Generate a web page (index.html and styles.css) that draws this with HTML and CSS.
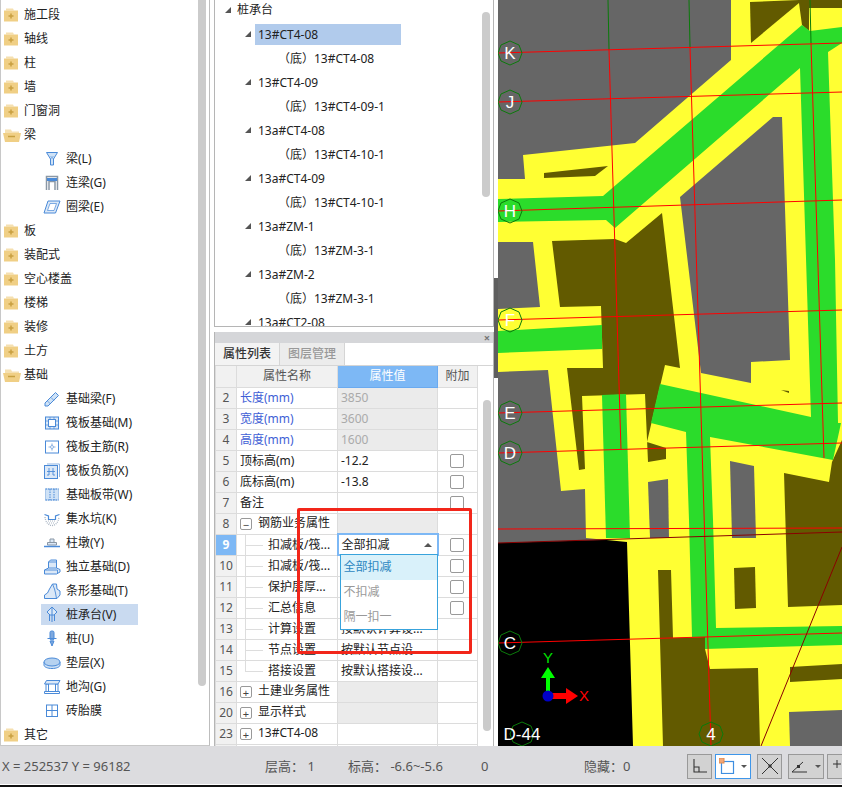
FILE: index.html
```html
<!DOCTYPE html>
<html lang="zh">
<head>
<meta charset="utf-8">
<title>属性列表</title>
<link rel="stylesheet" href="styles.css">
</head>
<body>
<svg class="defs" width="0" height="0">
  <symbol id="fc" viewBox="0 0 18 18"><path d="M3 2.500h7l1 2H3z" fill="#f5e0b0"/><rect x="1" y="4.500" width="14" height="11" fill="#f0cf85"/><path d="M8 7.500v5M5.500 10h5" stroke="#c8a040" stroke-width="1.500"/></symbol>
  <symbol id="fo" viewBox="0 0 18 18"><path d="M2 3.500h6l1 2h7V8H2z" fill="#f5e0b0"/><path d="M0 7h18l-2 9H2z" fill="#f0cf85"/><path d="M5 10.500h7" stroke="#c8a040" stroke-width="1.500"/></symbol>
</svg>
<div class="app">
  <div class="main">
    <aside class="left">
      <div class="tree">
        <div class="row"><svg class="fi"><use href="#fc"/></svg>施工段</div>
        <div class="row"><svg class="fi"><use href="#fc"/></svg>轴线</div>
        <div class="row"><svg class="fi"><use href="#fc"/></svg>柱</div>
        <div class="row"><svg class="fi"><use href="#fc"/></svg>墙</div>
        <div class="row"><svg class="fi"><use href="#fc"/></svg>门窗洞</div>
        <div class="row"><svg class="fi"><use href="#fo"/></svg>梁</div>
        <div class="row sub"><span class="item"><svg class="ic" viewBox="0 0 18 18"><path d="M3.500 2.500h11L10.500 9v6h-3V9z" fill="#cfe2f6" stroke="#4a8ad8"/><path d="M7.500 9l3-3M7.500 6l3 3" stroke="#4a8ad8" stroke-width=".6"/></svg>梁(L)</span></div>
        <div class="row sub"><span class="item"><svg class="ic" viewBox="0 0 18 18"><path d="M3.500 16V2.500h11V16M6 16V7.500h6V16" fill="none" stroke="#8a97a5" stroke-width="1.500"/><rect x="4" y="4" width="10" height="3" fill="#4a8ad8"/></svg>连梁(G)</span></div>
        <div class="row sub"><span class="item"><svg class="ic" viewBox="0 0 18 18"><path d="M5 3h12l-4.500 12H1z" fill="#dbe8f7" stroke="#4a8ad8"/><path d="M7 5.500h6.500l-2.500 7H4.500z" fill="#fff" stroke="#4a8ad8" stroke-width=".7"/></svg>圈梁(E)</span></div>
        <div class="row"><svg class="fi"><use href="#fc"/></svg>板</div>
        <div class="row"><svg class="fi"><use href="#fc"/></svg>装配式</div>
        <div class="row"><svg class="fi"><use href="#fc"/></svg>空心楼盖</div>
        <div class="row"><svg class="fi"><use href="#fc"/></svg>楼梯</div>
        <div class="row"><svg class="fi"><use href="#fc"/></svg>装修</div>
        <div class="row"><svg class="fi"><use href="#fc"/></svg>土方</div>
        <div class="row"><svg class="fi"><use href="#fo"/></svg>基础</div>
        <div class="row sub"><span class="item"><svg class="ic" viewBox="0 0 18 18"><path d="M2 13L12.500 2.500l3 3L5 16H2z" fill="#cfe2f6" stroke="#4a8ad8"/><path d="M4.500 11l3 3M8 7.500l3 3" stroke="#4a8ad8" stroke-width=".7"/></svg>基础梁(F)</span></div>
        <div class="row sub"><span class="item"><svg class="ic" viewBox="0 0 18 18"><rect x="2.500" y="3" width="13" height="12" fill="#dbe8f7" stroke="#4a8ad8"/><rect x="5.500" y="5.500" width="7" height="7" fill="#fff" stroke="#4a8ad8"/><path d="M2.500 7h3M2.500 11h3M12.500 7h3M12.500 11h3M7 3v2.500M11 3v2.500M7 12.500V15M11 12.500V15" stroke="#4a8ad8" stroke-width=".7"/></svg>筏板基础(M)</span></div>
        <div class="row sub"><span class="item"><svg class="ic" viewBox="0 0 18 18"><rect x="2.500" y="3" width="13" height="12" fill="#fff" stroke="#4a8ad8"/><path d="M9 5.500v7M5.500 9h7" stroke="#8fb5e4" stroke-width="1.200"/><circle cx="9" cy="9" r="1.500" fill="#fff" stroke="#8fb5e4"/></svg>筏板主筋(R)</span></div>
        <div class="row sub"><span class="item"><svg class="ic" viewBox="0 0 18 18"><path d="M4 2h12.500v13" fill="none" stroke="#8fb5e4"/><rect x="1.500" y="3.500" width="13" height="13" fill="#dbe8f7" stroke="#4a8ad8"/><path d="M6 6v7M10 6v7M4 9.500h8M6 13H4M12 13h-2" stroke="#4a8ad8" stroke-width=".9" fill="none"/></svg>筏板负筋(X)</span></div>
        <div class="row sub"><span class="item"><svg class="ic" viewBox="0 0 18 18"><rect x="2.500" y="3" width="13" height="11" fill="#cfe2f6" stroke="#a9c7ea"/><path d="M2.500 3h13M2.500 14h13M7 3v11M11 3v11" stroke="#4a8ad8" stroke-dasharray="1.500 1" fill="none"/></svg>基础板带(W)</span></div>
        <div class="row sub"><span class="item"><svg class="ic" viewBox="0 0 18 18"><path d="M1.500 4.500l4 1.500v3.500h7V6l4-1.500" fill="none" stroke="#4a8ad8" stroke-width="1.200"/><path d="M2 7c.5 5 3.500 8.500 7 8.500S15.500 12 16 7" fill="none" stroke="#aab6c4" stroke-width="1.300" stroke-dasharray="1 1"/><path d="M5 11h8M6 13h6" stroke="#aab6c4" stroke-dasharray="1 1"/></svg>集水坑(K)</span></div>
        <div class="row sub"><span class="item"><svg class="ic" viewBox="0 0 18 18"><path d="M7 5h4v3.500H7z" fill="#dbe8f7" stroke="#8a97a5"/><path d="M4.500 8.500h9V11h-9z" fill="#dbe8f7" stroke="#8a97a5"/><path d="M1 12.500h16" stroke="#4a8ad8" stroke-width="1.500"/></svg>柱墩(Y)</span></div>
        <div class="row sub"><span class="item"><svg class="ic" viewBox="0 0 18 18"><path d="M1.500 16v-4l4-2V4l2-2h6v8l3.500 1.500V14l-3.500 2z" fill="#dbe8f7" stroke="#4a8ad8"/><path d="M5.500 4h8M5.500 4v6h8M1.500 12h13v4" fill="none" stroke="#4a8ad8" stroke-width=".9"/></svg>独立基础(D)</span></div>
        <div class="row sub"><span class="item"><svg class="ic" viewBox="0 0 18 18"><path d="M1.500 16.500V13l3-2 2-4 3-5h4l.5 5 3 2v4l-3 3.500z" fill="#dbe8f7" stroke="#4a8ad8"/><path d="M9.500 2l2 5 1 4 1 5.500" fill="none" stroke="#4a8ad8" stroke-width=".9"/></svg>条形基础(T)</span></div>
        <div class="row sub"><span class="item active"><svg class="ic" viewBox="0 0 18 18"><path d="M9 1l5 5-3 3H7L4 6z" fill="#dbe8f7" stroke="#4a8ad8"/><path d="M9 1v15M6.500 9v6M11.500 9v6" stroke="#4a8ad8" fill="none"/></svg>桩承台(V)</span></div>
        <div class="row sub"><span class="item"><svg class="ic" viewBox="0 0 18 18"><rect x="7" y="1" width="4" height="9" rx="1.500" fill="#7fa9de" stroke="#4a8ad8"/><path d="M4.500 8.500h9M7 11h4l-2 5z" fill="#7fa9de" stroke="#4a8ad8"/></svg>桩(U)</span></div>
        <div class="row sub"><span class="item"><svg class="ic" viewBox="0 0 18 18"><path d="M1 8v3c0 2 3.500 3.500 8 3.500s8-1.500 8-3.500V8" fill="#cfe2f6" stroke="#4a8ad8"/><ellipse cx="9" cy="8" rx="8" ry="4" fill="#b6d2f0" stroke="#4a8ad8"/></svg>垫层(X)</span></div>
        <div class="row sub"><span class="item"><svg class="ic" viewBox="0 0 18 18"><path d="M1.500 15.500h15v-2h-15zM3 13.500V6h2.500v7.500M12.500 13.500V6H15v7.500" fill="#fff" stroke="#4a8ad8"/><path d="M1.500 6h13.500l2-3.500H3.500z" fill="#dbe8f7" stroke="#4a8ad8"/></svg>地沟(G)</span></div>
        <div class="row sub"><span class="item"><svg class="ic" viewBox="0 0 18 18"><rect x="3.500" y="3" width="11" height="11.500" fill="#fff" stroke="#4a8ad8"/><path d="M9 3v11.500M3.500 8.500h11" stroke="#4a8ad8"/></svg>砖胎膜</span></div>
        <div class="row"><svg class="fi"><use href="#fc"/></svg>其它</div>
      </div>
      <div class="lthumb"></div>
    </aside>

    <section class="mid">
      <div class="pile">
        <div class="plist">
          <div class="pr lv0"><i class="tri"></i>桩承台</div>
          <div class="pr lv1"><i class="tri"></i><span class="sel">13#CT4-08</span></div>
          <div class="pr lv2">（底）13#CT4-08</div>
          <div class="pr lv1"><i class="tri"></i><span class="plain">13#CT4-09</span></div>
          <div class="pr lv2">（底）13#CT4-09-1</div>
          <div class="pr lv1"><i class="tri"></i><span class="plain">13a#CT4-08</span></div>
          <div class="pr lv2">（底）13#CT4-10-1</div>
          <div class="pr lv1"><i class="tri"></i><span class="plain">13a#CT4-09</span></div>
          <div class="pr lv2">（底）13#CT4-10-1</div>
          <div class="pr lv1"><i class="tri"></i><span class="plain">13a#ZM-1</span></div>
          <div class="pr lv2">（底）13#ZM-3-1</div>
          <div class="pr lv1"><i class="tri"></i><span class="plain">13a#ZM-2</span></div>
          <div class="pr lv2">（底）13#ZM-3-1</div>
          <div class="pr lv1"><i class="tri"></i><span class="plain">13a#CT2-08</span></div>
        </div>
        <div class="pthumb"></div>
      </div>

      <div class="props">
        <div class="ptitle"><span class="close">×</span></div>
        <div class="tabs"><span class="tab on">属性列表</span><span class="tab">图层管理</span></div>
        <div class="pbody">
          <table class="grid">
            <colgroup><col class="c0"><col class="c1"><col class="c2"><col class="c3"></colgroup>
            <tr class="head"><th class="num"></th><th>属性名称</th><th class="hv">属性值</th><th>附加</th></tr>
            <tr><td class="num">2</td><td class="blue">长度(mm)</td><td class="ro">3850</td><td></td></tr>
            <tr><td class="num">3</td><td class="blue">宽度(mm)</td><td class="ro">3600</td><td></td></tr>
            <tr><td class="num">4</td><td class="blue">高度(mm)</td><td class="ro">1600</td><td></td></tr>
            <tr><td class="num">5</td><td>顶标高(m)</td><td>-12.2</td><td class="ck"><i class="box"></i></td></tr>
            <tr><td class="num">6</td><td>底标高(m)</td><td>-13.8</td><td class="ck"><i class="box"></i></td></tr>
            <tr><td class="num">7</td><td>备注</td><td></td><td class="ck"><i class="box"></i></td></tr>
            <tr><td class="num">8</td><td class="grp"><i class="exp">−</i>钢筋业务属性</td><td class="ro"></td><td></td></tr>
            <tr><td class="num cur">9</td><td class="kid">扣减板/筏...</td><td class="edit">全部扣减<i class="up"></i>
              <div class="drop"><div class="opt first">全部扣减</div><div class="opt">不扣减</div><div class="opt">隔一扣一</div></div>
            </td><td class="ck"><i class="box"></i></td></tr>
            <tr><td class="num">10</td><td class="kid">扣减板/筏...</td><td></td><td class="ck"><i class="box"></i></td></tr>
            <tr><td class="num">11</td><td class="kid">保护层厚...</td><td></td><td class="ck"><i class="box"></i></td></tr>
            <tr><td class="num">12</td><td class="kid">汇总信息</td><td></td><td class="ck"><i class="box"></i></td></tr>
            <tr><td class="num">13</td><td class="kid">计算设置</td><td>按默认计算设...</td><td></td></tr>
            <tr><td class="num">14</td><td class="kid">节点设置</td><td>按默认节点设...</td><td></td></tr>
            <tr><td class="num">15</td><td class="kid last">搭接设置</td><td>按默认搭接设...</td><td></td></tr>
            <tr><td class="num">16</td><td class="grp"><i class="exp">+</i>土建业务属性</td><td class="ro"></td><td></td></tr>
            <tr><td class="num">20</td><td class="grp"><i class="exp">+</i>显示样式</td><td class="ro"></td><td></td></tr>
            <tr><td class="num">23</td><td class="grp"><i class="exp">+</i>13#CT4-08</td><td></td><td></td></tr>
            <tr><td class="num"></td><td></td><td></td><td></td></tr>
          </table>
          <div class="gthumb"></div>
        </div>
        <div class="mark"></div>
      </div>
    </section>

    <div class="split"><div class="handle"></div></div>

    <svg class="canvas" viewBox="0 0 344 746">
      <rect class="c-gray" width="344" height="746"/>
      <polygon class="c-black" points="0,543 172,538 172,746 0,746"/>
      <polygon class="c-yel" points="233,0 233,60 137,143 25,155 27,179 0,179 0,242 35,242 42,307 0,309 0,372 50,370 63,491 87,489 88,538 129,542 135,746 344,746 344,0"/>
      <g class="c-olive">
        <polygon points="54,241 117,239 128,243 164,213 182,368 167,365 149,442 168,448 168,459 150,462 147,394 84,396 87,469 81,470 69,368 105,368 103,306 62,307"/>
        <polygon points="252,2 301,0 301,3 253,43"/>
        <polygon points="300,0 344,0 344,8 311,8 311,31 304,25 301,3"/>
        <polygon points="46,173 110,166 97,176 46,178"/>
        <polygon points="286,473 331,482 334,462 344,440 344,605 290,607"/>
        <polygon points="160,570 173,570 175,638 207,637 207,649 212,669 260,668 262,746 165,746"/>
        <polygon points="236,568 257,567 258,608 237,609"/>
        <polygon points="292,667 344,664 344,679 292,682"/>
        <polygon points="283,390 291,391 291,393"/>
      </g>
      <g class="c-green">
        <polygon points="0,199 105,196 304,25 312,31 344,27 344,43 330,52 337,260 340,423 343,423 335,460 212,437 215,520 218,628 344,626 344,645 207,649 207,637 194,637 191,520 188,432 153,423 162,384 313,417 302,68 117,228 108,220 0,222"/>
        <polygon points="0,331 104,325 104,349 0,353"/>
        <polygon points="104,395 128,394 132,538 108,538"/>
      </g>
      <g class="c-gray">
        <polygon points="275,117 284,117 292,360 253,362 253,383 203,373 182,197"/>
        <polygon points="150,482 170,479 171,538 152,538"/>
        <polygon points="232,461 256,466 258,538 234,538"/>
        <polygon points="291,712 344,710 344,746 292,746"/>
      </g>
      <g class="c-dgreen">
        <line x1="110" y1="0" x2="111" y2="50"/>
        <line x1="191" y1="0" x2="192" y2="47"/>
        <line x1="312" y1="0" x2="313" y2="43"/>
      </g>
      <g class="c-red">
        <line x1="0" y1="53" x2="344" y2="43"/>
        <line x1="0" y1="102" x2="344" y2="92"/>
        <line x1="0" y1="211" x2="344" y2="200"/>
        <line x1="0" y1="320" x2="344" y2="310"/>
        <line x1="0" y1="413" x2="344" y2="403"/>
        <line x1="0" y1="453" x2="344" y2="443"/>
        <line x1="0" y1="529" x2="344" y2="528"/>
        <line x1="0" y1="643" x2="344" y2="633"/>
        <line x1="111" y1="50" x2="123" y2="450"/>
        <line x1="192" y1="47" x2="213" y2="746"/>
        <line x1="313" y1="43" x2="326" y2="458"/>
      </g>
      <g class="c-dark">
        <line x1="0" y1="543" x2="344" y2="532"/>
        <line x1="344" y1="547" x2="263" y2="746"/>
      </g>
      <g class="c-hex">
        <polygon points="12,41 21,45 24,53 21,61 12,65 3,61 0,53 3,45"/>
        <polygon points="12,90 21,94 24,102 21,110 12,114 3,110 0,102 3,94"/>
        <polygon points="12,199 21,203 24,211 21,219 12,223 3,219 0,211 3,203"/>
        <polygon points="12,308 21,312 24,320 21,328 12,332 3,328 0,320 3,312"/>
        <polygon points="12,401 21,405 24,413 21,421 12,425 3,421 0,413 3,405"/>
        <polygon points="12,441 21,445 24,453 21,461 12,465 3,461 0,453 3,445"/>
        <polygon points="12,631 21,635 24,643 21,651 12,655 3,651 0,643 3,635"/>
        <polygon points="24,722 33,726 36,734 33,742 24,746 15,742 12,734 15,726"/>
        <polygon points="213,722 222,726 225,734 222,742 213,746 204,742 201,734 204,726"/>
      </g>
      <g class="c-label">
        <text x="12" y="59">K</text>
        <text x="12" y="108">J</text>
        <text x="12" y="217">H</text>
        <text x="12" y="326">F</text>
        <text x="12" y="419">E</text>
        <text x="12" y="459">D</text>
        <text x="12" y="649">C</text>
        <text x="213" y="740">4</text>
        <text x="24" y="740">D-44</text>
      </g>
      <path class="ax-g" d="M48 696v-18h-5l7-11 7 11h-5v18z"/>
      <path class="ax-r" d="M50 693h18v-5l12 8-12 8v-5H50z"/>
      <circle class="ax-b" cx="50" cy="696" r="5.500"/>
      <text class="ax-ty" x="50" y="663">Y</text>
      <text class="ax-tx" x="86" y="701">X</text>
    </svg>
  </div>

  <footer class="status">
    <span class="s-xy">X = 252537 Y = 96182</span>
    <span class="s-lh">层高：&nbsp;1</span>
    <span class="s-bg">标高：&nbsp;-6.6~-5.6</span>
    <span class="s-z">0</span>
    <span class="s-hide">隐藏：0</span>
    <span class="tools">
      <span class="tb"><svg width="16" height="16" viewBox="0 0 16 16"><path d="M2 1v13h13M2 9h5v5" fill="none" stroke="#333" stroke-width="1.100"/></svg></span>
      <span class="tb wide on"><svg width="16" height="16" viewBox="0 0 16 16"><rect x="2.500" y="3.500" width="12" height="12" fill="#fff" stroke="#3e8ee0" stroke-width="1.200"/><rect x="0" y="0" width="5" height="5" fill="#f3a878" stroke="#e08a50"/></svg><i class="dn"></i></span>
      <span class="tb"><svg width="20" height="20" viewBox="0 0 20 20"><path d="M2 2l16 16M18 2L2 18" stroke="#333" stroke-width="1"/><rect x="8.500" y="8.500" width="3" height="3" fill="#333"/></svg></span>
      <span class="tb wide"><svg width="18" height="18" viewBox="0 0 18 18"><path d="M1 15h15M1 15L12 5" stroke="#333" fill="none"/><rect x="6" y="8" width="3" height="3" fill="#333"/></svg><i class="dn"></i></span>
      <span class="tb cut"><svg width="16" height="16" viewBox="0 0 16 16"><path d="M1 6h8M5 2v8" stroke="#333"/><rect x="10" y="9" width="5" height="4" fill="#333"/></svg></span>
    </span>
  </footer>
  <div class="foot"></div>
</div>
</body>
</html>
```
FILE: styles.css
```css
* { box-sizing: border-box; }
html, body { margin: 0; height: 787px; overflow: hidden; background: #fff; }
body { font: 12px/1 "Noto Sans", "Noto Sans CJK SC", sans-serif; color: #222; }
.defs { position: absolute; }
.app { display: flex; flex-direction: column; width: 842px; height: 787px; }
.main { display: flex; height: 746px; background: #fff; }

/* left tree */
.left { display: flex; width: 210px; height: 746px; border-left: 1px solid #c8c8c8; border-right: 1px solid #bdbdbd; border-bottom: 1px solid #c8c8c8; }
.tree { width: 197px; padding-top: 2px; }
.row { display: flex; align-items: center; height: 24px; padding-left: 2px; padding-top: 1px; white-space: nowrap; }
.fi { width: 18px; height: 18px; margin-right: 3px; flex: none; }
.row.sub { padding-left: 40px; padding-top: 0; }
.item { display: flex; align-items: center; height: 21px; padding-left: 2px; padding-top: 1px; }
.item.active { width: 97px; background: #c9daf0; }
.ic { width: 18px; height: 18px; margin-right: 5px; flex: none; }
.lthumb { width: 8px; height: 686px; background: #cbcbcb; border-radius: 0 0 4px 4px; }

/* middle */
.mid { display: flex; flex-direction: column; width: 280px; margin-left: 4px; }
.pile { display: flex; height: 327px; flex: none; overflow: hidden; border: 1px solid #b5b5b5; border-top: 0; }
.plist { width: 267px; margin-top: -2px; }
.pr { display: flex; align-items: center; height: 24px; white-space: nowrap; }
.lv0 { padding-left: 10px; }
.lv1 { padding-left: 30px; }
.lv2 { padding: 1px 0 0 63px; }
.tri { width: 0; height: 0; margin-right: 6px; border-style: solid; border-width: 0 0 6px 6px; border-color: transparent transparent #555 transparent; flex: none; }
.sel, .plain { display: block; width: 146px; height: 21px; line-height: 21px; padding-left: 3px; }
.lv1 .tri { margin-right: 4px; }
.sel { background: #b1cbec; }
.pthumb { width: 8px; height: 185px; margin-top: 12px; background: #cbcbcb; border-radius: 4px; }

.props { position: relative; flex: 1; margin-top: 5px; border-left: 1px solid #b5b5b5; border-right: 1px solid #b5b5b5; overflow: hidden; }
.ptitle { display: flex; justify-content: flex-end; align-items: center; height: 11px; padding-right: 3px; background: #d5d6d9; color: #777; font-size: 11px; font-weight: 700; line-height: 11px; }
.tabs { display: flex; height: 23px; border-bottom: 1px solid #d5d5d5; }
.tab { display: flex; align-items: center; justify-content: center; width: 65px; color: #999; background: #ececec; border-right: 1px solid #d5d5d5; font-weight: 500; }
.tab.on { color: #333; background: #f3f3f3; }
.pbody { display: flex; }
.grid { width: 262px; table-layout: fixed; border-collapse: collapse; }
.c0 { width: 21px; } .c1 { width: 101px; } .c2 { width: 100px; } .c3 { width: 40px; }
.grid th, .grid td { height: 21px; padding: 0 3px; border: 1px solid #dcdcdc; font-weight: 400; white-space: nowrap; overflow: hidden; text-align: left; }
.grid .head th { border-top: 0; background: #f1f1f1; color: #555; text-align: center; }
.grid .head th.hv { background: #7db8f5; color: #fff; border-color: #6aaaf0; }
.grid td.num { background: #f1f1f1; color: #555; text-align: center; padding: 0; }
.grid td.cur { background: #7db8f5; color: #fff; font-weight: 700; }
.grid td.blue { color: #3f5fd6; }
.grid td.ro { background: #ebebeb; color: #aaa; }
.grid td.ck { text-align: center; padding: 0 1px 0 0; }
.box { display: block; width: 14px; height: 14px; margin: 0 auto; border: 1px solid #999; border-radius: 2px; background: #fff; }
.exp { display: inline-flex; align-items: center; justify-content: center; width: 12px; height: 12px; margin: 0 6px 0 0; border: 1px solid #999; border-radius: 2px; font-style: normal; color: #444; vertical-align: -2px; font-size: 11px; }
.grid td.kid { padding-left: 31px; background: linear-gradient(#ddd, #ddd) 8px 0 / 1px 100% no-repeat, linear-gradient(#ddd, #ddd) 8px 10px / 18px 1px no-repeat; overflow: visible; }
.grid td.kid.last { background: linear-gradient(#ddd, #ddd) 8px 0 / 1px 11px no-repeat, linear-gradient(#ddd, #ddd) 8px 10px / 18px 1px no-repeat; }
.grid td.edit { position: relative; overflow: visible; border: 2px solid #7db8f5; }
.up { position: absolute; right: 5px; top: 8px; width: 0; height: 0; border-style: solid; border-width: 0 4px 4px; border-color: transparent transparent #555; }
.drop { position: absolute; left: 1px; top: 19px; width: 98px; height: 76px; background: #fff; border: 1px solid #38a3dc; color: #999; z-index: 2; }
.opt { display: flex; align-items: center; height: 25px; padding: 0 0 2px 3px; }
.opt.first { background: #d9f1fa; color: #2c86c0; }
.gthumb { width: 8px; height: 331px; margin: 34px 0 0 5px; background: #cbcbcb; border-radius: 4px; flex: none; }
.mark { position: absolute; left: 82px; top: 176px; width: 175px; height: 146px; border: 3px solid #f2261a; border-radius: 2px; z-index: 3; pointer-events: none; }

/* splitter */
.split { width: 4px; }
.handle { width: 4px; height: 100px; margin-top: 278px; background: #5f5f5f; }

/* canvas */
.canvas { display: block; width: 344px; height: 746px; flex: none; }
.c-gray { fill: #666; }
.c-black { fill: #000; }
.c-yel { fill: #ffff33; }
.c-olive { fill: #625a00; }
.c-green { fill: #2bdc2b; }
.c-dgreen line { stroke: #0a7a0a; stroke-width: 1; }
.c-red line { stroke: #f00; stroke-width: 1; }
.c-dark line { stroke: #8a0000; stroke-width: 1; }
.c-hex polygon { fill: none; stroke: #0b7a0b; stroke-width: 1; }
.c-label text { fill: #fff; font: 17px "Liberation Sans", sans-serif; text-anchor: middle; }
.ax-g { fill: #00ff00; }
.ax-r { fill: #f00; }
.ax-b { fill: #0000c8; }
.ax-ty, .ax-tx { font: 15px "Liberation Sans", sans-serif; text-anchor: middle; }
.ax-ty { fill: #00e000; }
.ax-tx { fill: #f00; }

/* status */
.status { display: flex; align-items: center; height: 39px; padding: 2px 0 0 2px; background: #dcdcdf; border-bottom: 1px solid #fff; color: #555; font-size: 13px; white-space: nowrap; }
.status > span { flex: none; }
.s-xy { width: 263px; }
.s-lh { width: 83px; }
.s-bg { width: 133px; }
.s-z { width: 103px; }
.s-hide { width: 103px; }
.tools { display: flex; align-items: center; gap: 3px; }
.tb { display: flex; align-items: center; justify-content: center; flex: none; width: 25px; height: 25px; margin-right: 3px; border: 1px solid #999; background: #d2d2d2; }
.tb:first-child { margin-right: 0; }
.tb.wide { width: 36px; gap: 6px; }
.tb.wide + .tb.cut { margin-left: -3px; }
.tb.on { background: #fff; border-color: #3e96ea; }
.dn { width: 0; height: 0; border-style: solid; border-width: 3px 3px 0; border-color: #555 transparent transparent; }
.foot { height: 2px; background: #111; }
```
